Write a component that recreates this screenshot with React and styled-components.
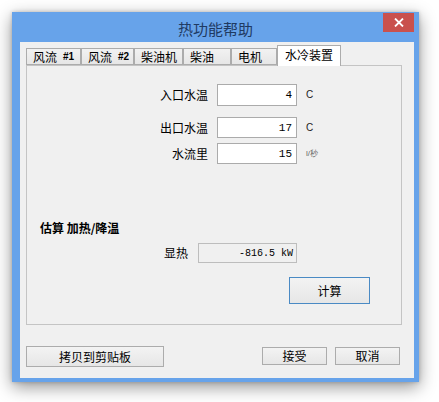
import React from "react";
import styled, { createGlobalStyle } from "styled-components";

const Global = createGlobalStyle`
  html, body { margin: 0; padding: 0; background: #ffffff; }
  body { font-family: "Noto Sans CJK SC", "Noto Sans", sans-serif; }
`;

const Desktop = styled.div`
  width: 439px;
  height: 402px;
  padding: 12px 0 0 12px;
  box-sizing: border-box;
`;

const Window = styled.div`
  width: 407px;
  height: 370px;
  background: #67a3ea;
  display: flex;
  flex-direction: column;
  box-shadow: 0 5px 16px rgba(0, 0, 0, 0.42), 0 0 4px rgba(0, 0, 0, 0.2);
`;

const TitleBar = styled.div`
  position: relative;
  height: 30px;
  display: flex;
  align-items: center;
  justify-content: center;
  flex-shrink: 0;
`;

const Title = styled.div`
  font-size: 15px;
  color: #1f3a62;
  line-height: 1;
  margin-top: 2px;
`;

const CloseButton = styled.div`
  position: absolute;
  top: 1px;
  right: 5px;
  width: 31px;
  height: 19px;
  background: #c9514d;
  display: flex;
  align-items: center;
  justify-content: center;
`;

const Client = styled.div`
  flex: 1;
  margin: 0 5px 4px 8px;
  background: #f0f0f0;
  padding: 3px 12px 0 6px;
  display: flex;
  flex-direction: column;
`;

const TabList = styled.div`
  height: 20px;
  display: flex;
  align-items: flex-end;
  position: relative;
  z-index: 2;
`;

const Tab = styled.div`
  width: ${(p) => p.$w}px;
  height: ${(p) => (p.$active ? 21 : 17)}px;
  margin-bottom: ${(p) => (p.$active ? -1 : 0)}px;
  box-sizing: border-box;
  border: 1px solid #acacac;
  border-bottom: ${(p) => (p.$active ? "none" : "1px solid #acacac")};
  background: ${(p) =>
    p.$active ? "#ffffff" : "linear-gradient(#f2f2f2, #e6e6e6)"};
  font-size: 12px;
  line-height: 1;
  color: #000;
  display: flex;
  align-items: center;
  padding: ${(p) => (p.$active ? "0 0 2px 7px" : "1px 0 0 6px")};
  white-space: nowrap;
  overflow: hidden;
`;

const TabNum = styled.span`
  font-family: "Liberation Sans", Arial, sans-serif;
  font-size: 10px;
  font-weight: bold;
  margin-left: 6px;
`;

const Panel = styled.div`
  height: 260px;
  box-sizing: border-box;
  border: 1px solid #c4c4c4;
  background: #f0f0f0;
  display: flex;
  flex-direction: column;
`;

const FieldRow = styled.div`
  display: grid;
  grid-template-columns: 181px 80px auto;
  column-gap: 9px;
  align-items: center;
  margin-top: ${(p) => p.$mt}px;
  height: ${(p) => p.$h}px;
`;

const Label = styled.div`
  text-align: right;
  font-size: 12px;
  color: #000;
  line-height: 1;
`;

const Input = styled.div`
  height: 100%;
  box-sizing: border-box;
  border: 1px solid #ababab;
  background: #ffffff;
  font-family: "Liberation Mono", "DejaVu Sans Mono", monospace;
  font-size: 11px;
  color: #000;
  display: flex;
  align-items: center;
  justify-content: flex-end;
  padding-right: 4px;
`;

const Unit = styled.div`
  font-family: "Liberation Sans", Arial, sans-serif;
  font-size: ${(p) => (p.$small ? 8 : 10)}px;
  color: ${(p) => (p.$small ? "#666" : "#222")};
  line-height: 1;
`;

const Heading = styled.div`
  margin: 57px 0 0 13px;
  font-size: 12px;
  font-weight: bold;
  line-height: 14px;
  color: #000;
`;

const ResultRow = styled.div`
  display: grid;
  grid-template-columns: 161px 99px;
  column-gap: 10px;
  align-items: center;
  margin-top: 8px;
  height: 20px;
`;

const ReadOnly = styled.div`
  height: 100%;
  box-sizing: border-box;
  border: 1px solid #bdbdbd;
  background: #f0f0f0;
  font-family: "Liberation Mono", "DejaVu Sans Mono", monospace;
  font-size: 10px;
  color: #000;
  display: flex;
  align-items: center;
  justify-content: flex-end;
  padding-right: 3px;
  white-space: pre;
`;

const ActionRow = styled.div`
  display: flex;
  justify-content: flex-end;
  padding-right: 31px;
  margin-top: 14px;
`;

const Button = styled.div`
  width: ${(p) => p.$w}px;
  height: ${(p) => p.$h}px;
  box-sizing: border-box;
  border: 1px solid ${(p) => (p.$default ? "#4a8ac4" : "#acacac")};
  background: linear-gradient(#f3f3f3, #e6e6e6);
  font-size: 12px;
  color: #000;
  display: flex;
  align-items: center;
  justify-content: center;
  line-height: 1;
`;

const Footer = styled.div`
  margin-top: 21px;
  display: flex;
  align-items: flex-start;
`;

const FooterRight = styled.div`
  margin-left: auto;
  margin-right: 2px;
  margin-top: 1px;
  display: flex;
  gap: 8px;
`;

const tabs = [
  { t: "风流", n: "#1", w: 55 },
  { t: "风流", n: "#2", w: 53 },
  { t: "柴油机", w: 49 },
  { t: "柴油", w: 48 },
  { t: "电机", w: 46 },
  { t: "水冷装置", w: 64, active: true },
];

export default function App() {
  return (
    <>
      <Global />
      <Desktop>
        <Window>
          <TitleBar>
            <Title>热功能帮助</Title>
            <CloseButton>
              <svg width="10" height="9" viewBox="0 0 10 9">
                <path d="M1 0.5 L9 8.5 M9 0.5 L1 8.5" stroke="#fff" strokeWidth="1.8" />
              </svg>
            </CloseButton>
          </TitleBar>
          <Client>
            <TabList>
              {tabs.map((tb, i) => (
                <Tab key={i} $w={tb.w} $active={tb.active}>
                  {tb.t}
                  {tb.n && <TabNum>{tb.n}</TabNum>}
                </Tab>
              ))}
            </TabList>
            <Panel>
              <FieldRow $mt={18} $h={22}>
                <Label>入口水温</Label>
                <Input>4</Input>
                <Unit>C</Unit>
              </FieldRow>
              <FieldRow $mt={11} $h={21}>
                <Label>出口水温</Label>
                <Input>17</Input>
                <Unit>C</Unit>
              </FieldRow>
              <FieldRow $mt={5} $h={21}>
                <Label>水流里</Label>
                <Input>15</Input>
                <Unit $small>l/秒</Unit>
              </FieldRow>
              <Heading>估算 加热/降温</Heading>
              <ResultRow>
                <Label>显热</Label>
                <ReadOnly>-816.5 kW</ReadOnly>
              </ResultRow>
              <ActionRow>
                <Button $w={81} $h={27} $default>
                  计算
                </Button>
              </ActionRow>
            </Panel>
            <Footer>
              <Button $w={138} $h={21}>
                拷贝到剪贴板
              </Button>
              <FooterRight>
                <Button $w={65} $h={18}>
                  接受
                </Button>
                <Button $w={65} $h={18}>
                  取消
                </Button>
              </FooterRight>
            </Footer>
          </Client>
        </Window>
      </Desktop>
    </>
  );
}
